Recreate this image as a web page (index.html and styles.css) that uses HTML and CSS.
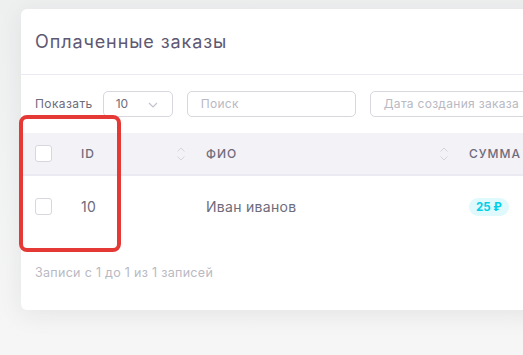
FILE: index.html
```html
<!DOCTYPE html>
<html lang="ru">
<head>
<meta charset="utf-8">
<link rel="stylesheet" href="styles.css">
</head>
<body>
<div class="page">
  <div class="card">
    <div class="card-header">
      <h4 class="card-title">Оплаченные заказы</h4>
    </div>
    <div class="filters">
      <label class="show-label">Показать</label>
      <div class="select">
        <span>10</span>
        <svg class="chev" width="10" height="6" viewBox="0 0 10 6"><path d="M1 1l4 4 4-4" fill="none" stroke="#c4c2cc" stroke-width="1.2"/></svg>
      </div>
      <div class="input search">Поиск</div>
      <div class="input date">Дата создания заказа</div>
    </div>
    <table class="table">
      <thead>
        <tr>
          <th class="c-check"><span class="checkbox"></span></th>
          <th class="c-id"><div class="th-in"><span>ID</span><svg class="sort" width="10" height="16" viewBox="0 0 10 16"><path d="M1.5 5.5L5 2l3.5 3.5M1.5 10.5L5 14l3.5-3.5" fill="none" stroke="#d6d4dc" stroke-width="1"/></svg></div></th>
          <th class="c-name"><div class="th-in"><span>ФИО</span><svg class="sort" width="10" height="16" viewBox="0 0 10 16"><path d="M1.5 5.5L5 2l3.5 3.5M1.5 10.5L5 14l3.5-3.5" fill="none" stroke="#d6d4dc" stroke-width="1"/></svg></div></th>
          <th class="c-sum">Сумма</th>
        </tr>
      </thead>
      <tbody>
        <tr>
          <td class="c-check"><span class="checkbox"></span></td>
          <td class="c-id id-val">10</td>
          <td class="c-name">Иван иванов</td>
          <td class="c-sum"><span class="badge">25 ₽</span></td>
        </tr>
      </tbody>
    </table>
    <div class="info">Записи с 1 до 1 из 1 записей</div>
    <div class="highlight"></div>
  </div>
</div>
</body>
</html>
```

FILE: styles.css
```css
* { box-sizing: border-box; }
html, body { margin: 0; padding: 0; }
body {
  width: 523px;
  height: 355px;
  overflow: hidden;
  background: linear-gradient(180deg, #eef0f0 0%, #f6f6f6 100%);
  font-family: "Inter", "Noto Sans", sans-serif;
  color: #6e6b7b;
}
.page {
  padding: 9px 0 0 21px;
}
.card {
  position: relative;
  width: 600px;
  height: 301px;
  background: #fff;
  border-radius: 6px;
  box-shadow: 0 4px 24px 0 rgba(34, 41, 47, 0.08);
}
.card-header {
  height: 66px;
  border-bottom: 1px solid #ebe9f1;
  display: flex;
  align-items: center;
  padding: 0 14px;
}
.card-title {
  margin: 0;
  font-size: 18px;
  font-weight: 400;
  color: #5e5873;
  letter-spacing: 0.9px;
}
.filters {
  display: flex;
  align-items: center;
  padding: 15px 14px 0 14px;
  height: 42px;
}
.show-label {
  font-size: 12px;
  color: #6e6b7b;
  letter-spacing: 0.4px;
  margin-right: 10px;
}
.select {
  width: 70px;
  height: 26px;
  border: 1px solid #d8d6de;
  border-radius: 5px;
  display: flex;
  align-items: center;
  justify-content: space-between;
  padding: 0 14px 0 12px;
  font-size: 12px;
  color: #6e6b7b;
  margin-right: 14px;
}
.chev { margin-top: 2px; }
.input {
  height: 26px;
  border: 1px solid #d8d6de;
  border-radius: 5px;
  display: flex;
  align-items: center;
  padding: 0 13px;
  font-size: 12px;
  letter-spacing: 0.3px;
  color: #b9b9c3;
}
.search { width: 169px; margin-right: 14px; }
.date { width: 170px; }
.table {
  margin-top: 16px;
  border-collapse: collapse;
  width: 600px;
}
.table th {
  height: 42px;
  background: #f3f2f7;
  border-bottom: 2px solid #ebe9f1;
  text-align: left;
  font-size: 12px;
  font-weight: 500;
  letter-spacing: 1px;
  text-transform: uppercase;
  color: #6e6b7b;
  padding: 0 0 0 14px;
}
.table td {
  height: 62px;
  font-size: 14px;
  letter-spacing: 0.3px;
  color: #6e6b7b;
  padding: 0 0 0 14px;
}
.c-check { width: 46px; }
.c-id { width: 125px; }
.c-name { width: 263px; }
.th-in {
  display: flex;
  align-items: center;
  justify-content: space-between;
  padding-right: 6px;
}
.sort { display: block; }
.checkbox {
  display: block;
  width: 17px;
  height: 17px;
  border: 1px solid #d8d6de;
  border-radius: 3px;
  background: #fff;
}
.id-val { font-weight: 400; }
.badge {
  display: inline-block;
  height: 18px;
  line-height: 18px;
  padding: 0 7px;
  border-radius: 9px;
  background: #e0f9fc;
  color: #00cfe8;
  font-size: 11.5px;
  letter-spacing: 0;
  font-weight: 700;
}
.info {
  padding: 28px 14px 0 14px;
  font-size: 12.5px;
  letter-spacing: 0.3px;
  color: #b9b9c3;
}
.highlight {
  position: absolute;
  left: -2px;
  top: 106px;
  width: 102px;
  height: 137px;
  border: 4px solid #e53935;
  border-radius: 8px;
}
```
